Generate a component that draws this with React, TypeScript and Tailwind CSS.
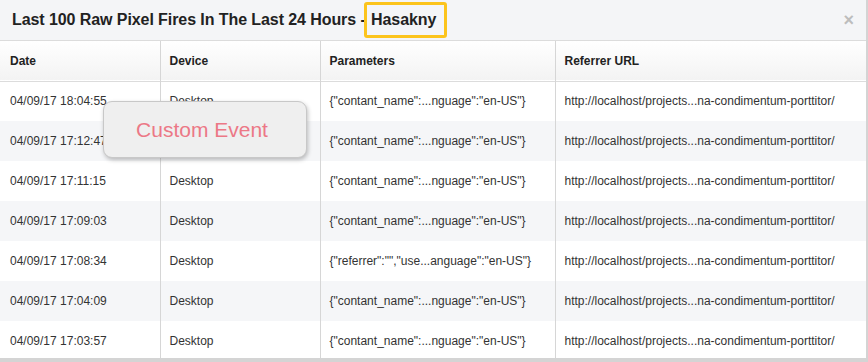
import React from "react";

type Fire = { date: string; device: string; params: string; url: string };

const ROWS: Fire[] = [
  { date: "04/09/17 18:04:55", device: "Desktop", params: '{"contant_name":...nguage":"en-US"}', url: "http://localhost/projects...na-condimentum-porttitor/" },
  { date: "04/09/17 17:12:47", device: "Desktop", params: '{"contant_name":...nguage":"en-US"}', url: "http://localhost/projects...na-condimentum-porttitor/" },
  { date: "04/09/17 17:11:15", device: "Desktop", params: '{"contant_name":...nguage":"en-US"}', url: "http://localhost/projects...na-condimentum-porttitor/" },
  { date: "04/09/17 17:09:03", device: "Desktop", params: '{"contant_name":...nguage":"en-US"}', url: "http://localhost/projects...na-condimentum-porttitor/" },
  { date: "04/09/17 17:08:34", device: "Desktop", params: '{"referrer":"","use...anguage":"en-US"}', url: "http://localhost/projects...na-condimentum-porttitor/" },
  { date: "04/09/17 17:04:09", device: "Desktop", params: '{"contant_name":...nguage":"en-US"}', url: "http://localhost/projects...na-condimentum-porttitor/" },
  { date: "04/09/17 17:03:57", device: "Desktop", params: '{"contant_name":...nguage":"en-US"}', url: "http://localhost/projects...na-condimentum-porttitor/" },
];

export default function App() {
  return (
    <div className="relative h-[362px] w-[868px] overflow-hidden border-r-2 border-b-4 border-[#d4d4d4] bg-white font-['Liberation_Sans',Arial,sans-serif]">
      {/* modal header */}
      <div className="flex h-[41px] items-center justify-between border-b border-[#dcdcdc] bg-[#f4f5f7] pl-[12px] pr-[12px]">
        <h2 className="text-[16px] font-bold tracking-[-0.08px] text-[#222]">
          Last 100 Raw Pixel Fires In The Last 24 Hours -{" "}
          <span className="-ml-[6px] inline-block rounded-[3px] border-[3px] border-[#fcc41c] py-[5px] pl-[4px] pr-[8px] leading-[20px]">
            Hasakny
          </span>
        </h2>
        <span className="text-[18px] font-bold leading-none text-[#bdbdbd]">×</span>
      </div>

      <table className="w-full table-fixed border-collapse text-[12px] text-[#333]">
        <colgroup>
          <col className="w-[160px]" />
          <col className="w-[160px]" />
          <col className="w-[235px]" />
          <col />
        </colgroup>
        <thead>
          <tr className="h-[40px] border-b border-[#dcdcdc] bg-gradient-to-b from-white to-[#f3f3f3] text-left text-[#222]">
            <th className="border-r border-[#d6d6d6] pl-[10px] font-bold">Date</th>
            <th className="border-r border-[#d6d6d6] pl-[9px] font-bold">Device</th>
            <th className="border-r border-[#d6d6d6] pl-[9px] font-bold">Parameters</th>
            <th className="pl-[9px] font-bold">Referrer URL</th>
          </tr>
        </thead>
        <tbody>
          {ROWS.map((r, i) => (
            <tr key={i} className={i % 2 === 1 ? "h-[40px] bg-[#f5f6f8]" : "h-[40px] bg-white"}>
              <td className="border-r border-[#d6d6d6] pl-[10px]">{r.date}</td>
              <td className="border-r border-[#d6d6d6] pl-[9px]">{r.device}</td>
              <td className="border-r border-[#d6d6d6] pl-[9px]">{r.params}</td>
              <td className="pl-[9px]">{r.url}</td>
            </tr>
          ))}
        </tbody>
      </table>

      {/* floating label */}
      <div className="absolute left-[103px] top-[101px] flex h-[57px] w-[204px] items-center justify-center rounded-[9px] border border-[#c8c8c8] bg-[#efefef] pr-[6px] shadow-[1px_2px_4px_rgba(0,0,0,0.25)]">
        <span className="text-[21px] text-[#ec7886]">Custom Event</span>
      </div>
    </div>
  );
}
